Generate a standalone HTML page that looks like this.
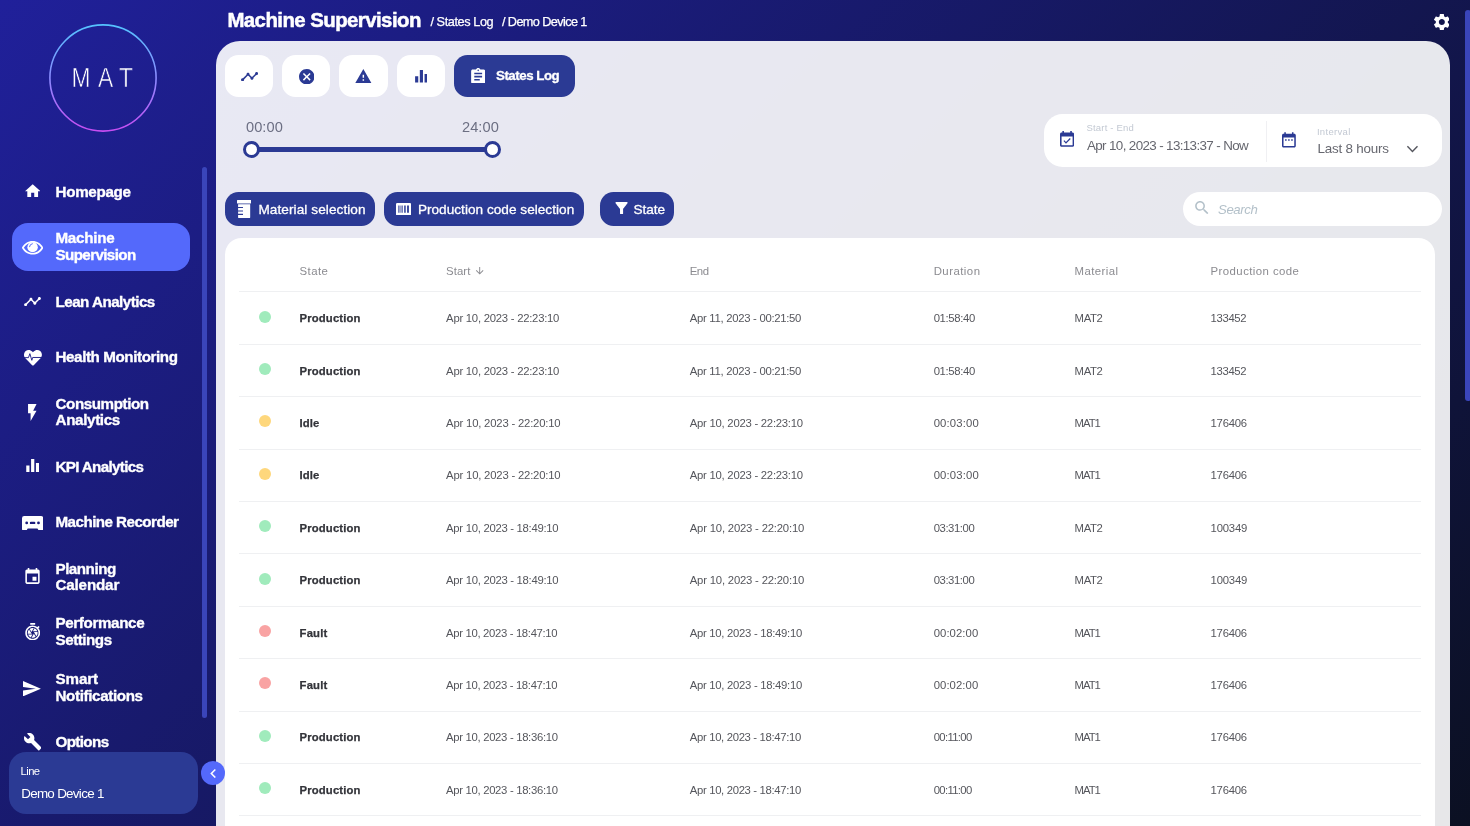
<!DOCTYPE html>
<html lang="en">
<head>
<meta charset="utf-8">
<title>Machine Supervision - States Log</title>
<style>
*{box-sizing:border-box;margin:0;padding:0}
html,body{width:1470px;height:826px;overflow:hidden}
body{font-family:"Liberation Sans",sans-serif;background:linear-gradient(135deg,#20209a 0%,#0b1022 100%);position:relative;color:#fff;will-change:transform}
svg{display:block}
.tx{position:absolute;white-space:pre;line-height:1;display:block}
h1.tx{font-weight:bold}
.ic{position:absolute;display:block}
/* sidebar */
.sidebar{position:absolute;left:0;top:0;width:216px;height:826px}
.logo{position:absolute;left:47.100px;top:21.600px}
.nav{position:absolute;left:12px;top:168.100px;width:178.300px;list-style:none}
.nav li{position:absolute;left:0;width:178.300px;height:48.200px;border-radius:16px}
.nav li.active{background:#5469fb}
.nav li a{display:block;width:100%;height:100%;color:#fff}
.sscroll{position:absolute;left:202px;top:167px;width:5px;height:551px;border-radius:3px;background:#3a45ba}
.linebox{position:absolute;left:9px;top:752px;width:188.600px;height:62px;border-radius:17px;background:#2b3a94}
.collapse{position:absolute;z-index:5;left:200.700px;top:760.900px;width:24.300px;height:24.300px;border-radius:50%;background:#5469fb}
/* header */
.top{position:absolute;left:0;top:0;width:1470px;height:41px}
.pscroll{position:absolute;left:1465.300px;top:10px;width:6px;height:391px;border-radius:3px;background:#3a45ba}
/* panel */
.panel{position:absolute;left:216px;top:41px;width:1234.100px;height:800px;border-radius:24px 24px 0 0;background:rgba(255,255,255,.9)}
.tab{position:absolute;top:14px;width:48.200px;height:42.300px;border-radius:13.500px;background:#fff;}
.tab.on{width:121px;background:#2b3a94}
.track{position:absolute;left:36px;top:106.400px;width:240px;height:4.200px;background:#2b3a94}
.thumb{position:absolute;width:17.600px;height:17.600px;border-radius:50%;background:#fff;border:3.600px solid #2b3a94}
.dates{position:absolute;left:827.600px;top:73px;width:398px;height:53.100px;border-radius:18.500px;background:#fff}
.dates .sep{position:absolute;left:222px;top:6.500px;width:1px;height:41px;background:#f0f0f3}
.fbtn{position:absolute;top:151px;height:33.900px;border-radius:13.500px;background:#2b3a94}
.med{-webkit-text-stroke:.3px #fff}
.search{position:absolute;left:966.700px;top:150.800px;width:259.100px;height:34.700px;border-radius:17.500px;background:#fff}
/* table */
.card{position:absolute;left:9px;top:197.200px;width:1210px;height:620px;border-radius:16.500px 16.500px 0 0;background:#fff;overflow:hidden}
table{position:absolute;left:13.800px;top:.7px;width:1181.800px;border-collapse:collapse;table-layout:fixed}
th,td{text-align:left;font-weight:normal;white-space:pre;padding:0;vertical-align:middle;border-bottom:1px solid #eff0f2;position:relative}
th{height:53px;font-size:11.400px;color:#8b8b90;padding-top:12.300px}
td{height:52.400px;font-size:11.300px;color:#55565c;padding-top:.260px}
td.st{font-weight:bold;color:#33343a}
.arr{display:inline-block;vertical-align:-1.500px;margin-left:4px}
.dot{position:absolute;left:20.100px;top:18.200px;width:12px;height:12px;border-radius:50%}
.g{background:#a0ebbc}.y{background:#fed77c}.r{background:#f9a3a3}
h1.tx{-webkit-text-stroke:.5px #fff}
.nl{-webkit-text-stroke:.35px #fff}
.crumb{-webkit-text-stroke:.25px #fff}
.tab.on .tx{-webkit-text-stroke:.3px #fff}
td.st{-webkit-text-stroke:.25px #33343a}
</style>
</head>
<body>
<aside class="sidebar">
<div class="logo-wrap"><svg class="logo" width="112" height="112" viewBox="0 0 112 112"><defs><linearGradient id="lg" x1="0" y1="0" x2="0" y2="1"><stop offset="0" stop-color="#55c3ff"/><stop offset="0.5" stop-color="#8c8cff"/><stop offset="1" stop-color="#c84df2"/></linearGradient></defs><circle cx="56" cy="56" r="53.1" fill="none" stroke="url(#lg)" stroke-width="1.6"/><g transform="scale(0.8,1)"><text y="65.400" x="30.75 63.75 90.12" font-family="Liberation Sans, sans-serif" font-size="28.5" fill="#fff" stroke="#1e1f91" stroke-width="0.6">MAT</text></g></svg></div>
<ul class="nav">
<li style="top:0.00px"><a><svg class="ic" style="left:12.70px;top:15.80px" width="15.40" height="13.60" viewBox="2 3 20 17"><path fill="#fff" d="M10 20v-6h4v6h5v-8h3L12 3 2 12h3v8z"/></svg><span class="tx nl" style="left:43.50px;top:16.10px;font-size:15.2px;letter-spacing:-0.308px;font-weight:bold;">Homepage</span></a></li>
<li class="active" style="top:55.05px"><a><svg class="ic" style="left:10.00px;top:18.35px" width="21.20" height="13.60" viewBox="0 64 576 384" preserveAspectRatio="none"><path fill="#fff" d="M572.520 241.400C518.290 135.590 410.930 64 288 64S57.680 135.640 3.480 241.410a32.350 32.350 0 0 0 0 29.190C57.710 376.410 165.070 448 288 448s230.320-71.640 284.520-177.410a32.350 32.350 0 0 0 0-29.190zM288 400c-98.650 0-189.090-55-237.930-144C98.910 167 189.340 112 288 112s189.090 55 237.930 144C477.100 345 386.660 400 288 400z"/><circle cx="288" cy="238" r="142" fill="#fff"/><path d="M204 226A92 92 0 0 1 282 140" fill="none" stroke="#5469fb" stroke-width="27" stroke-linecap="round"/></svg><span class="tx nl" style="left:43.50px;top:7.05px;font-size:15.2px;letter-spacing:-0.278px;font-weight:bold;">Machine</span><span class="tx nl" style="left:43.50px;top:24.05px;font-size:15.2px;letter-spacing:-0.624px;font-weight:bold;">Supervision</span></a></li>
<li style="top:110.10px"><a><svg class="ic" style="left:12.10px;top:18.50px" width="17.00" height="9.20" viewBox="1.0 6 22 12"><path fill="#fff" d="M23 8c0 1.1-.9 2-2 2-.18 0-.35-.02-.51-.07l-3.56 3.55c.05.16.07.34.07.52 0 1.1-.9 2-2 2s-2-.9-2-2c0-.18.02-.36.07-.52l-2.55-2.55c-.16.05-.34.07-.52.07s-.36-.02-.52-.07l-4.55 4.56c.05.16.07.33.07.51 0 1.1-.9 2-2 2s-2-.9-2-2 .9-2 2-2c.18 0 .35.02.51.07l4.56-4.55C8.02 9.36 8 9.18 8 9c0-1.1.9-2 2-2s2 .9 2 2c0 .18-.02.36-.07.52l2.55 2.55c.16-.05.34-.07.52-.07s.36.02.52.07l3.55-3.56C19.02 8.35 19 8.18 19 8c0-1.1.9-2 2-2s2 .9 2 2z"/></svg><span class="tx nl" style="left:43.50px;top:16.00px;font-size:15.2px;letter-spacing:-0.526px;font-weight:bold;">Lean Analytics</span></a></li>
<li style="top:165.15px"><a><svg class="ic" style="left:11.70px;top:17.15px" width="17.90" height="15.50" viewBox="0 32 512 448" preserveAspectRatio="none"><path fill="#fff" d="M462.300 62.600C407.500 15.900 326 24.300 275.700 76.200L256 96.500l-19.700-20.300C186.100 24.300 104.500 15.900 49.700 62.600c-62.800 53.600-66.100 149.800-9.900 207.900l193.500 199.800c12.500 12.900 32.800 12.900 45.300 0l193.500-199.800c56.300-58.100 53-154.300-9.800-207.900z"/><path d="M-10 253H128L168 138 224 330 248 248H530" fill="none" stroke="#1c1d86" stroke-width="27" stroke-linejoin="miter"/></svg><span class="tx nl" style="left:43.50px;top:15.95px;font-size:15.2px;letter-spacing:-0.412px;font-weight:bold;">Health Monitoring</span></a></li>
<li style="top:220.20px"><a><svg class="ic" style="left:16.00px;top:15.90px" width="8.60" height="17.00" viewBox="7 2 10 20"><path fill="#fff" d="M7 2v11h3v9l7-12h-4l4-8z"/></svg><span class="tx nl" style="left:43.50px;top:7.90px;font-size:15.2px;letter-spacing:-0.426px;font-weight:bold;">Consumption</span><span class="tx nl" style="left:43.50px;top:23.90px;font-size:15.2px;letter-spacing:-0.341px;font-weight:bold;">Analytics</span></a></li>
<li style="top:275.25px"><a><svg class="ic" style="left:13.70px;top:16.15px" width="13.40" height="12.90" viewBox="4 4 16 16"><path fill="#fff" d="M10 20h4V4h-4v16zm-6 0h4v-8H4v8zM16 9v11h4V9h-4z"/></svg><span class="tx nl" style="left:43.50px;top:15.85px;font-size:15.2px;letter-spacing:-0.668px;font-weight:bold;">KPI Analytics</span></a></li>
<li style="top:330.30px"><a><svg class="ic" style="left:10.00px;top:17.20px" width="21.20" height="14.40" viewBox="0 0 21.2 14.4" preserveAspectRatio="none"><path fill="#fff" fill-rule="evenodd" d="M2.200 0H19a2.200 2.200 0 0 1 2.200 2.200V12.900a1.500 1.500 0 0 1-1.500 1.500h-2.300a1.500 1.500 0 0 1-1.300-.800l-.600-1.100H5.700l-.600 1.100a1.500 1.500 0 0 1-1.300.800H1.500A1.500 1.500 0 0 1 0 12.900V2.200A2.200 2.200 0 0 1 2.200 0zM4.700 5.500a1.400 1.400 0 1 0 0 2.800a1.400 1.400 0 1 0 0-2.800zM16.500 5.500a1.400 1.400 0 1 0 0 2.800a1.400 1.400 0 1 0 0-2.800zM9 5.700h3.200a1.200 1.200 0 0 1 0 2.400H9a1.200 1.200 0 0 1 0-2.400z"/></svg><span class="tx nl" style="left:43.50px;top:15.80px;font-size:15.2px;letter-spacing:-0.545px;font-weight:bold;">Machine Recorder</span></a></li>
<li style="top:385.35px"><a><svg class="ic" style="left:13.10px;top:14.55px" width="15.00" height="15.90" viewBox="3 1 18 20"><path fill="#fff" d="M17 12h-5v5h5v-5zM16 1v2H8V1H6v2H5c-1.11 0-1.99.9-1.99 2L3 19c0 1.1.89 2 2 2h14c1.1 0 2-.9 2-2V5c0-1.1-.9-2-2-2h-1V1h-2zm3 18H5V8h14v11z"/></svg><span class="tx nl" style="left:43.50px;top:7.75px;font-size:15.2px;letter-spacing:-0.489px;font-weight:bold;">Planning</span><span class="tx nl" style="left:43.50px;top:23.75px;font-size:15.2px;letter-spacing:-0.171px;font-weight:bold;">Calendar</span></a></li>
<li style="top:440.40px"><a><svg class="ic" style="left:13.10px;top:14.40px" width="15.40" height="17.30" viewBox="3 1 17.999 21"><path fill="#fff" d="M15 1H9v2h6V1zm4.030 6.390 1.420-1.420c-.450-.510-.900-.970-1.410-1.410l-1.420 1.420A8.962 8.962 0 0 0 12 4c-4.970 0-9 4.030-9 9s4.020 9 9 9a8.994 8.994 0 0 0 7.030-14.610zM12 20c-3.870 0-7-3.130-7-7s3.130-7 7-7 7 3.130 7 7-3.130 7-7 7zm-.320-5H6.350a5.992 5.992 0 0 0 3.410 3.560l-.110-.060 2.030-3.500zm5.970-4a6.012 6.012 0 0 0-3.340-3.520L12.260 11h5.390zm-7.040 7.830c.450.110.910.170 1.390.170 1.340 0 2.570-.450 3.570-1.190l-2.110-3.900-2.850 4.920zM7.550 8.990A5.965 5.965 0 0 0 6 13c0 .340.040.670.090 1h4.720L7.550 8.990zm8.790 8.140A5.940 5.940 0 0 0 18 13c0-.340-.040-.670-.090-1h-4.340l2.770 5.130zm-3.010-9.980C12.900 7.060 12.460 7 12 7c-1.400 0-2.690.490-3.710 1.290l2.320 3.560 2.720-4.700z"/></svg><span class="tx nl" style="left:43.50px;top:6.70px;font-size:15.2px;letter-spacing:-0.376px;font-weight:bold;">Performance</span><span class="tx nl" style="left:43.50px;top:23.70px;font-size:15.2px;letter-spacing:-0.475px;font-weight:bold;">Settings</span></a></li>
<li style="top:495.45px"><a><svg class="ic" style="left:11.30px;top:17.15px" width="17.90" height="15.40" viewBox="2 3 21 18"><path fill="#fff" d="M2.01 21L23 12 2.01 3 2 10l15 2-15 2z"/></svg><span class="tx nl" style="left:43.50px;top:7.65px;font-size:15.2px;letter-spacing:-0.116px;font-weight:bold;">Smart</span><span class="tx nl" style="left:43.50px;top:24.65px;font-size:15.2px;letter-spacing:-0.374px;font-weight:bold;">Notifications</span></a></li>
<li style="top:550.50px"><a><svg class="ic" style="left:11.70px;top:14.60px" width="17.50" height="17.50" viewBox="0.956 1.1 22.033 21.9"><path fill="#fff" d="M22.7 19l-9.1-9.1c.9-2.3.4-5-1.5-6.9-2-2-5-2.4-7.4-1.3L9 6 6 9 1.6 4.7C.4 7.1.9 10.1 2.9 12.1c1.9 1.9 4.6 2.4 6.9 1.5l9.1 9.1c.4.4 1 .4 1.4 0l2.3-2.3c.5-.4.5-1.1.1-1.4z"/></svg><span class="tx nl" style="left:43.50px;top:15.60px;font-size:15.2px;letter-spacing:-0.629px;font-weight:bold;">Options</span></a></li>
</ul>
<div class="sscroll"></div>
<div class="linebox"><span class="tx" style="left:11.60px;top:13.65px;font-size:11.3px;letter-spacing:-0.62px;">Line</span><span class="tx" style="left:12.20px;top:35.10px;font-size:13.4px;letter-spacing:-0.696px;">Demo Device 1</span></div>
</aside>
<div class="collapse"><svg class="ic" style="left:9.30px;top:7.90px" width="6.10" height="9.10" viewBox="8 6 7.41 12"><path fill="#fff" d="M15.41 7.41L14 6l-6 6 6 6 1.41-1.41L10.83 12z"/></svg></div>
<header class="top">
<h1 class="tx" style="left:227.40px;top:10.10px;font-size:20.4px;letter-spacing:-0.554px;font-weight:bold;">Machine Supervision</h1>
<span class="tx crumb" style="left:430.40px;top:15.95px;font-size:12.7px;letter-spacing:-0.411px;">/ States Log</span>
<span class="tx crumb" style="left:502.00px;top:15.95px;font-size:12.7px;letter-spacing:-0.599px;">/ Demo Device 1</span>
<svg class="ic" style="left:1433.70px;top:13.80px" width="15.70" height="16.20" viewBox="2.662 2.4 18.676 19.2"><path fill="#fff" d="M19.14 12.94c.04-.3.06-.61.06-.94 0-.32-.02-.64-.07-.94l2.03-1.58c.18-.14.23-.41.12-.61l-1.92-3.32c-.12-.22-.37-.29-.59-.22l-2.39.96c-.5-.38-1.03-.7-1.62-.94l-.36-2.54c-.04-.24-.24-.41-.48-.41h-3.84c-.24 0-.43.17-.47.41l-.36 2.54c-.59.24-1.13.57-1.62.94l-2.39-.96c-.22-.08-.47 0-.59.22L2.74 8.87c-.12.21-.08.47.12.61l2.03 1.58c-.05.3-.09.63-.09.94s.02.64.07.94l-2.03 1.58c-.18.14-.23.41-.12.61l1.92 3.32c.12.22.37.29.59.22l2.39-.96c.5.38 1.03.7 1.62.94l.36 2.54c.05.24.24.41.48.41h3.84c.24 0 .44-.17.47-.41l.36-2.54c.59-.24 1.13-.56 1.62-.94l2.39.96c.22.08.47 0 .59-.22l1.92-3.32c.12-.22.07-.47-.12-.61l-2.01-1.58zM12 15.6c-1.98 0-3.6-1.62-3.6-3.6s1.62-3.6 3.6-3.6 3.6 1.62 3.6 3.6-1.62 3.6-3.6 3.6z"/></svg>
</header>
<div class="pscroll"></div>
<main class="panel">
<div class="tabs"><div class="tab" style="left:9.00px"><svg class="ic" style="left:15.60px;top:16.60px" width="17.20" height="9.40" viewBox="1.0 6 22 12"><path fill="#2b3a94" d="M23 8c0 1.1-.9 2-2 2-.18 0-.35-.02-.51-.07l-3.56 3.55c.05.16.07.34.07.52 0 1.1-.9 2-2 2s-2-.9-2-2c0-.18.02-.36.07-.52l-2.55-2.55c-.16.05-.34.07-.52.07s-.36-.02-.52-.07l-4.55 4.56c.05.16.07.33.07.51 0 1.1-.9 2-2 2s-2-.9-2-2 .9-2 2-2c.18 0 .35.02.51.07l4.56-4.55C8.02 9.36 8 9.18 8 9c0-1.1.9-2 2-2s2 .9 2 2c0 .18-.02.36-.07.52l2.55 2.55c.16-.05.34-.07.52-.07s.36.02.52.07l3.55-3.56C19.02 8.35 19 8.18 19 8c0-1.1.9-2 2-2s2 .9 2 2z"/></svg></div><div class="tab" style="left:66.17px"><svg class="ic" style="left:16.73px;top:13.60px" width="15.50" height="15.50" viewBox="2 2 20 20"><path fill="#2b3a94" d="M12 2C6.47 2 2 6.47 2 12s4.47 10 10 10 10-4.47 10-10S17.53 2 12 2zm5 13.59L15.59 17 12 13.41 8.41 17 7 15.59 10.59 12 7 8.41 8.41 7 12 10.59 15.59 7 17 8.41 13.41 12 17 15.59z"/></svg></div><div class="tab" style="left:123.34px"><svg class="ic" style="left:16.06px;top:14.40px" width="16.70" height="13.90" viewBox="1 2 22 19"><path fill="#2b3a94" d="M1 21h22L12 2 1 21zm12-3h-2v-2h2v2zm0-4h-2v-4h2v4z"/></svg></div><div class="tab" style="left:180.51px"><svg class="ic" style="left:18.09px;top:15.20px" width="12.80" height="12.60" viewBox="4 4 16 16"><path fill="#2b3a94" d="M10 20h4V4h-4v16zm-6 0h4v-8H4v8zM16 9v11h4V9h-4z"/></svg></div><div class="tab on" style="left:238px"><svg class="ic" style="left:17.10px;top:12.80px" width="14.40" height="15.70" viewBox="3 1 18 20"><path fill="#fff" d="M19 3h-4.18C14.4 1.84 13.3 1 12 1c-1.3 0-2.4.84-2.82 2H5c-1.1 0-2 .9-2 2v14c0 1.1.9 2 2 2h14c1.1 0 2-.9 2-2V5c0-1.1-.9-2-2-2zm-7 0c.55 0 1 .45 1 1s-.45 1-1 1-1-.45-1-1 .45-1 1-1zm2 14H7v-2h7v2zm3-4H7v-2h10v2zm0-4H7V7h10v2z"/></svg><span class="tx" style="left:42.00px;top:14.15px;font-size:13.3px;letter-spacing:-0.476px;font-weight:bold;">States Log</span></div></div>
<div class="slider"><span class="tx" style="left:30.00px;top:79.00px;font-size:14.6px;letter-spacing:0.067px;color:#6c6f83;">00:00</span><span class="tx" style="left:246.00px;top:79.00px;font-size:14.6px;letter-spacing:0.067px;color:#6c6f83;">24:00</span>
<div class="track"></div><div class="thumb" style="left:26.70px;top:99.70px"></div><div class="thumb" style="left:267.70px;top:99.70px"></div></div>
<div class="dates">
<svg class="ic" style="left:16.50px;top:17.30px" width="14.20" height="15.80" viewBox="3 1 18 20"><path fill="#2b3a94" d="M16.53 11.06L15.47 10l-4.88 4.88-2.12-2.12-1.06 1.06L10.59 17l5.94-5.94zM19 3h-1V1h-2v2H8V1H6v2H5c-1.11 0-1.99.9-1.99 2L3 19c0 1.1.89 2 2 2h14c1.1 0 2-.9 2-2V5c0-1.1-.9-2-2-2zm0 16H5V8h14v11z"/></svg>
<span class="tx" style="left:42.90px;top:9.05px;font-size:9.5px;letter-spacing:0.198px;color:#c3c9d3;">Start - End</span>
<span class="tx" style="left:43.40px;top:25.10px;font-size:13.4px;letter-spacing:-0.632px;color:#66676f;">Apr 10, 2023 - 13:13:37 - Now</span>
<div class="sep"></div>
<svg class="ic" style="left:238.60px;top:18.20px" width="13.80" height="15.80" viewBox="3 2 18 20"><path fill="#2b3a94" d="M9 11H7v2h2v-2zm4 0h-2v2h2v-2zm4 0h-2v2h2v-2zm2-7h-1V2h-2v2H8V2H6v2H5c-1.11 0-1.99.9-1.99 2L3 20c0 1.1.89 2 2 2h14c1.1 0 2-.9 2-2V6c0-1.1-.9-2-2-2zm0 16H5V9h14v11z"/></svg>
<span class="tx" style="left:273.30px;top:13.05px;font-size:9.5px;letter-spacing:0.321px;color:#c3c9d3;">Interval</span>
<span class="tx" style="left:273.80px;top:28.10px;font-size:13.4px;letter-spacing:-0.2px;color:#66676f;">Last 8 hours</span>
<svg class="ic" style="left:361.40px;top:29.00px" width="15" height="12" viewBox="0 0 15 12"><path d="M2.400 3.300 7.450 8.400 12.500 3.300" fill="none" stroke="#55565e" stroke-width="1.400"/></svg>
</div>
<div class="fbtn" style="left:8.90px;width:150px"><svg class="ic" style="left:12.00px;top:7.50px" width="14.20" height="18.50" viewBox="0 0 14.2 18.5" preserveAspectRatio="none"><path fill="#fff" d="M.500 0h13.200a.500.500 0 0 1 .500.500v2.400a.500.500 0 0 1-.500.500H.500a.500.500 0 0 1-.500-.500V.500A.500.500 0 0 1 .500 0zM1.100 4.200h12.100v12.700a1.600 1.600 0 0 1-1.600 1.600H2.700a1.600 1.600 0 0 1-1.600-1.600V15h4.900v-1.200H1.100v-2.200h4.900v-1.200H1.100V8.100h4.900V6.900H1.100z"/></svg><span class="tx med" style="left:33.50px;top:11.00px;font-size:13.6px;letter-spacing:0.083px;">Material selection</span></div>
<div class="fbtn" style="left:168.10px;width:200.1px"><svg class="ic" style="left:11.90px;top:10.60px" width="15.10" height="12.40" viewBox="0 0 15.1 12.4" preserveAspectRatio="none"><path fill="#fff" fill-rule="evenodd" d="M1.200 0h12.700a1.200 1.200 0 0 1 1.200 1.200v10a1.200 1.200 0 0 1-1.200 1.200H1.200A1.200 1.200 0 0 1 0 11.200v-10A1.200 1.200 0 0 1 1.200 0zM2 2.500v7.300h.650V2.500zM3.150 2.500v7.300h.450V2.500zM4.100 2.500v7.300h.450V2.500zM5.050 2.500v7.300h.450V2.500zM6 2.500v7.300h.650V2.500zM8.200 2.500v7.300h1.500V2.500zM11.100 2.500v7.300h1.800V2.500z"/></svg><span class="tx med" style="left:33.80px;top:11.00px;font-size:13.6px;letter-spacing:0.026px;">Production code selection</span></div>
<div class="fbtn" style="left:383.70px;width:74.1px"><svg class="ic" style="left:15.00px;top:10.10px" width="13.10" height="12.30" viewBox="4.038 4 15.913 16"><path fill="#fff" d="M4.25 5.61C6.27 8.2 10 13 10 13v6c0 .55.45 1 1 1h2c.55 0 1-.45 1-1v-6s3.72-4.8 5.74-7.39c.51-.66.04-1.61-.79-1.61H5.04c-.83 0-1.3.95-.79 1.61z"/></svg><span class="tx med" style="left:33.80px;top:11.00px;font-size:13.6px;letter-spacing:-0.062px;">State</span></div>
<div class="search"><svg class="ic" style="left:12.60px;top:9.40px" width="13.50" height="13.20" viewBox="3 3 17.49 17.49"><path fill="#b3c0c9" d="M15.5 14h-.79l-.28-.27C15.41 12.59 16 11.11 16 9.5 16 5.91 13.09 3 9.5 3S3 5.91 3 9.5 5.91 16 9.5 16c1.61 0 3.09-.59 4.23-1.57l.27.28v.79l5 4.99L20.49 19l-4.99-5zm-6 0C7.01 14 5 11.99 5 9.5S7.01 5 9.5 5 14 7.01 14 9.5 11.99 14 9.5 14z"/></svg><span class="tx" style="left:35.30px;top:11.40px;font-size:13.2px;letter-spacing:-0.399px;color:#b3c0c9;font-style:italic;">Search</span></div>
<section class="card"><table><colgroup><col style="width:60.8px"><col style="width:146.5px"><col style="width:243.7px"><col style="width:243.9px"><col style="width:140.9px"><col style="width:136.0px"><col style="width:210.0px"></colgroup>
<thead><tr><th></th><th><span style="letter-spacing:0.398px">State</span></th><th><span style="letter-spacing:0.059px">Start</span><span class="arr"><svg width="11.4" height="11.4" viewBox="0 0 24 24" ><path fill="#8b8b90" d="M20 12l-1.41-1.41L13 16.17V4h-2v12.17l-5.58-5.59L4 12l8 8 8-8z"/></svg></span></th><th><span style="letter-spacing:-0.541px">End</span></th><th><span style="letter-spacing:0.462px">Duration</span></th><th><span style="letter-spacing:0.426px">Material</span></th><th><span style="letter-spacing:0.434px">Production code</span></th></tr></thead>
<tbody>
<tr><td class="dc"><i class="dot g"></i></td><td class="st"><span style="letter-spacing:0.131px">Production</span></td><td><span style="letter-spacing:-0.246px">Apr 10, 2023 - 22:23:10</span></td><td><span style="letter-spacing:-0.285px">Apr 11, 2023 - 00:21:50</span></td><td><span style="letter-spacing:-0.341px">01:58:40</span></td><td><span style="letter-spacing:-0.332px">MAT2</span></td><td><span style="letter-spacing:-0.341px">133452</span></td></tr>
<tr><td class="dc"><i class="dot g"></i></td><td class="st"><span style="letter-spacing:0.131px">Production</span></td><td><span style="letter-spacing:-0.246px">Apr 10, 2023 - 22:23:10</span></td><td><span style="letter-spacing:-0.285px">Apr 11, 2023 - 00:21:50</span></td><td><span style="letter-spacing:-0.341px">01:58:40</span></td><td><span style="letter-spacing:-0.332px">MAT2</span></td><td><span style="letter-spacing:-0.341px">133452</span></td></tr>
<tr><td class="dc"><i class="dot y"></i></td><td class="st"><span style="letter-spacing:0.11px">Idle</span></td><td><span style="letter-spacing:-0.192px">Apr 10, 2023 - 22:20:10</span></td><td><span style="letter-spacing:-0.246px">Apr 10, 2023 - 22:23:10</span></td><td><span style="letter-spacing:0.145px">00:03:00</span></td><td><span style="letter-spacing:-0.999px">MAT1</span></td><td><span style="letter-spacing:-0.241px">176406</span></td></tr>
<tr><td class="dc"><i class="dot y"></i></td><td class="st"><span style="letter-spacing:0.11px">Idle</span></td><td><span style="letter-spacing:-0.192px">Apr 10, 2023 - 22:20:10</span></td><td><span style="letter-spacing:-0.246px">Apr 10, 2023 - 22:23:10</span></td><td><span style="letter-spacing:0.145px">00:03:00</span></td><td><span style="letter-spacing:-0.999px">MAT1</span></td><td><span style="letter-spacing:-0.241px">176406</span></td></tr>
<tr><td class="dc"><i class="dot g"></i></td><td class="st"><span style="letter-spacing:0.131px">Production</span></td><td><span style="letter-spacing:-0.283px">Apr 10, 2023 - 18:49:10</span></td><td><span style="letter-spacing:-0.192px">Apr 10, 2023 - 22:20:10</span></td><td><span style="letter-spacing:-0.426px">03:31:00</span></td><td><span style="letter-spacing:-0.332px">MAT2</span></td><td><span style="letter-spacing:-0.201px">100349</span></td></tr>
<tr><td class="dc"><i class="dot g"></i></td><td class="st"><span style="letter-spacing:0.131px">Production</span></td><td><span style="letter-spacing:-0.283px">Apr 10, 2023 - 18:49:10</span></td><td><span style="letter-spacing:-0.192px">Apr 10, 2023 - 22:20:10</span></td><td><span style="letter-spacing:-0.426px">03:31:00</span></td><td><span style="letter-spacing:-0.332px">MAT2</span></td><td><span style="letter-spacing:-0.201px">100349</span></td></tr>
<tr><td class="dc"><i class="dot r"></i></td><td class="st"><span style="letter-spacing:0.15px">Fault</span></td><td><span style="letter-spacing:-0.328px">Apr 10, 2023 - 18:47:10</span></td><td><span style="letter-spacing:-0.283px">Apr 10, 2023 - 18:49:10</span></td><td><span style="letter-spacing:0.074px">00:02:00</span></td><td><span style="letter-spacing:-0.999px">MAT1</span></td><td><span style="letter-spacing:-0.241px">176406</span></td></tr>
<tr><td class="dc"><i class="dot r"></i></td><td class="st"><span style="letter-spacing:0.15px">Fault</span></td><td><span style="letter-spacing:-0.328px">Apr 10, 2023 - 18:47:10</span></td><td><span style="letter-spacing:-0.283px">Apr 10, 2023 - 18:49:10</span></td><td><span style="letter-spacing:0.074px">00:02:00</span></td><td><span style="letter-spacing:-0.999px">MAT1</span></td><td><span style="letter-spacing:-0.241px">176406</span></td></tr>
<tr><td class="dc"><i class="dot g"></i></td><td class="st"><span style="letter-spacing:0.131px">Production</span></td><td><span style="letter-spacing:-0.31px">Apr 10, 2023 - 18:36:10</span></td><td><span style="letter-spacing:-0.328px">Apr 10, 2023 - 18:47:10</span></td><td><span style="letter-spacing:-0.663px">00:11:00</span></td><td><span style="letter-spacing:-0.999px">MAT1</span></td><td><span style="letter-spacing:-0.241px">176406</span></td></tr>
<tr><td class="dc"><i class="dot g"></i></td><td class="st"><span style="letter-spacing:0.131px">Production</span></td><td><span style="letter-spacing:-0.31px">Apr 10, 2023 - 18:36:10</span></td><td><span style="letter-spacing:-0.328px">Apr 10, 2023 - 18:47:10</span></td><td><span style="letter-spacing:-0.663px">00:11:00</span></td><td><span style="letter-spacing:-0.999px">MAT1</span></td><td><span style="letter-spacing:-0.241px">176406</span></td></tr>
<tr><td class="dc"><i class="dot g"></i></td><td class="st"><span style="letter-spacing:0.131px">Production</span></td><td><span style="letter-spacing:-0.396px">Apr 10, 2023 - 16:12:10</span></td><td><span style="letter-spacing:-0.31px">Apr 10, 2023 - 18:36:10</span></td><td><span style="letter-spacing:0.002px">02:24:00</span></td><td><span style="letter-spacing:-0.332px">MAT2</span></td><td><span style="letter-spacing:-0.341px">133452</span></td></tr>
</tbody></table></section>
</main>
</body>
</html>
